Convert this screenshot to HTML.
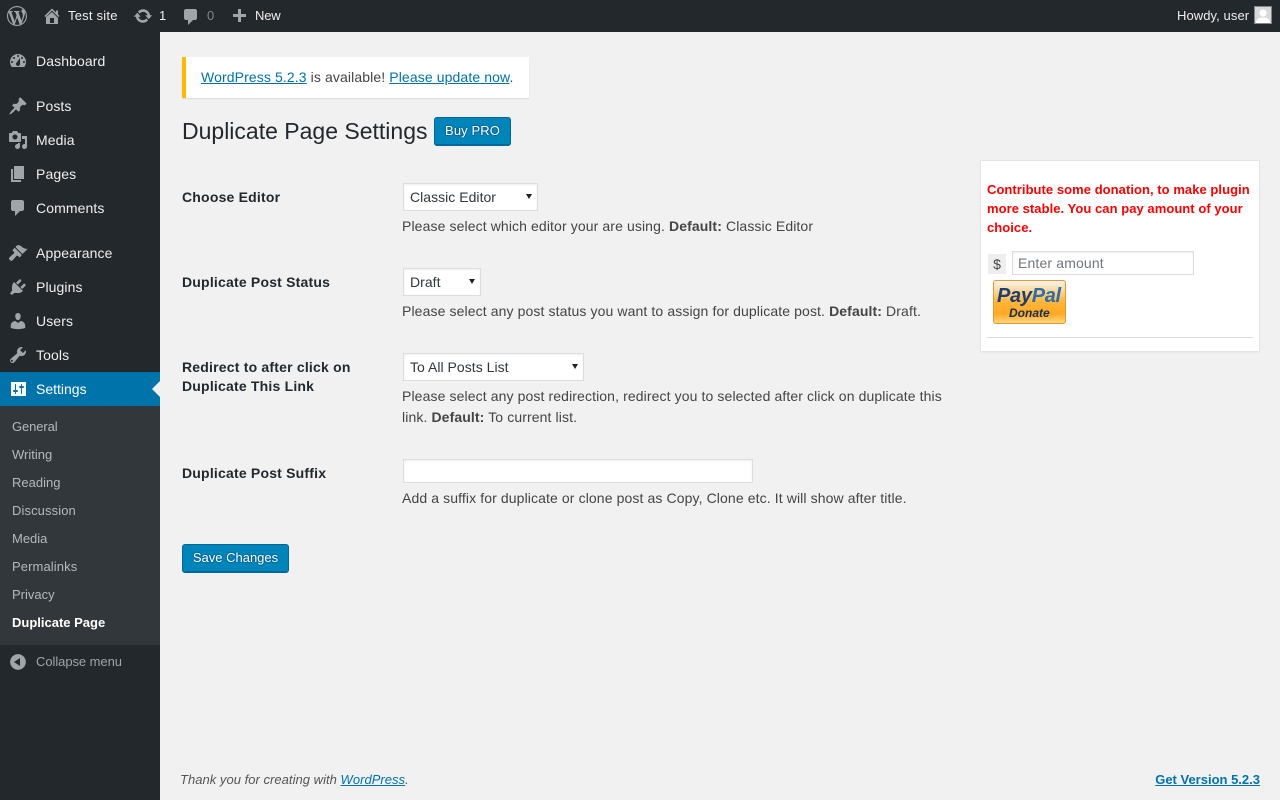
<!DOCTYPE html>
<html lang="en"><head><meta charset="utf-8"><title>Duplicate Page Settings</title>
<style>
*{box-sizing:border-box}
html,body{margin:0;padding:0;width:1280px;height:800px;overflow:hidden;background:#f1f1f1;font-family:"Liberation Sans",Arial,sans-serif;font-size:14px;color:#444}
.a{position:absolute;white-space:nowrap}
#bar{position:absolute;left:0;top:0;width:1280px;height:32px;background:#23282d}
#side{position:absolute;left:0;top:32px;width:160px;height:768px;background:#23282d}
#sub{position:absolute;left:0;top:406px;width:160px;height:239px;background:#32373c}
#act{position:absolute;left:0;top:372px;width:160px;height:34px;background:#0073aa}
.bt{font-size:13px;line-height:32px;top:0;color:#eee}
.m{left:36px;font-size:14px;line-height:18px;color:#eee;letter-spacing:.1px}
.s{left:12px;font-size:13px;line-height:18px;color:#b4b9be}
svg{position:absolute;fill:#a0a5aa}
a{color:#0073aa;text-decoration:underline}
.lb{left:182px;font-weight:700;font-size:14px;line-height:19px;color:#23282d;letter-spacing:.2px}
.sel{position:absolute;background:#fff;border:1px solid #ddd;box-shadow:inset 0 1px 2px rgba(0,0,0,.07);font-size:14px;color:#32373c;line-height:26px;padding-left:6px;letter-spacing:.03px}
.sel i{position:absolute;right:5px;top:10px;width:0;height:0;border-left:3px solid transparent;border-right:3px solid transparent;border-top:5px solid #222}
.d{left:402px;font-size:14px;line-height:21px;color:#444;letter-spacing:.11px}
.btn{position:absolute;background:#0085ba;border:1px solid #006799;border-bottom-width:2px;border-radius:3px;color:#fff;font-size:13px;text-align:center;text-shadow:0 -1px 1px #006799,1px 0 1px #006799,0 1px 1px #006799,-1px 0 1px #006799}
</style></head><body>

<div id="bar"></div>
<svg style="left:7px;top:6px" width="20" height="20" viewBox="0 0 20 20"><path fill-rule="evenodd" d="M20 10c0-5.510-4.490-10-10-10C4.480 0 0 4.490 0 10c0 5.520 4.480 10 10 10 5.510 0 10-4.480 10-10zM7.780 15.370L4.370 6.220c.55-.02 1.170-.08 1.170-.08.5-.06.44-1.130-.06-1.110 0 0-1.450.11-2.370.11-.18 0-.37 0-.58-.01C4.120 2.690 6.870 1.110 10 1.110c2.330 0 4.450.87 6.050 2.340-.68-.11-1.650.39-1.650 1.580 0 .74.45 1.360.9 2.100.35.61.55 1.360.55 2.460 0 1.490-1.400 5-1.400 5l-3.030-8.370c.54-.02.82-.17.82-.17.5-.05.44-1.250-.06-1.220 0 0-1.440.12-2.380.12-.87 0-2.330-.12-2.330-.12-.5-.03-.56 1.200-.06 1.220l.92.08 1.260 3.410zM17.410 10c.24-.64.74-1.870.43-4.250.7 1.290 1.050 2.710 1.050 4.250 0 3.290-1.730 6.240-4.400 7.780.97-2.590 1.940-5.200 2.920-7.780zM6.100 18.090C3.120 16.650 1.110 13.530 1.110 10c0-1.300.23-2.480.72-3.590C3.250 10.300 4.670 14.200 6.100 18.090zm4.030-6.630l2.580 6.980c-.86.29-1.760.45-2.710.45-.79 0-1.570-.11-2.290-.33.81-2.380 1.620-4.740 2.420-7.100z"/></svg>
<svg style="left:42px;top:6px" width="20" height="20" viewBox="0 0 20 20"><path fill-rule="evenodd" d="M16 8.500l1.530 1.530-1.060 1.060L10 4.620l-6.470 6.470-1.060-1.060L10 2.500l4 4v-2h2v4zm-6-2.460l6 5.990V18H4v-6.970zM12 17v-5H8v5h4z"/></svg>
<div class="a bt" style="left:68px;letter-spacing:.22px">Test site</div>
<svg style="left:133px;top:6px" width="20" height="20" viewBox="0 0 20 20"><path d="M10.200 3.280c3.530 0 6.430 2.610 6.920 6h2.080l-3.500 4-3.500-4h2.320c-.45-1.970-2.210-3.440-4.320-3.440-1.450 0-2.730.71-3.540 1.780L4.950 5.660C6.230 4.200 8.110 3.280 10.200 3.280zm-.4 13.440c-3.520 0-6.430-2.610-6.920-6H.8l3.500-4c1.170 1.330 2.330 2.670 3.500 4H5.480c.45 1.970 2.210 3.440 4.320 3.440 1.450 0 2.730-.71 3.540-1.780l1.710 1.950c-1.280 1.460-3.150 2.390-5.250 2.390z"/></svg>
<div class="a bt" style="left:159px">1</div>
<svg style="left:181px;top:7px" width="20" height="20" viewBox="0 0 20 20"><path d="M5 2h9c1.100 0 2 .9 2 2v7c0 1.100-.9 2-2 2h-2l-5 5v-5H5c-1.100 0-2-.9-2-2V4c0-1.100.9-2 2-2z"/></svg>
<div class="a bt" style="left:207px;color:#82878c">0</div>
<svg style="left:228.500px;top:7px" width="20" height="20" viewBox="0 0 20 20"><path d="M17 7v3h-5v5H9v-5H4V7h5V2h3v5h5z"/></svg>
<div class="a bt" style="left:255px;letter-spacing:-.2px">New</div>
<div class="a bt" style="left:1177px;letter-spacing:.08px">Howdy, user</div>
<svg style="left:1254px;top:6px;fill:none" width="18" height="18" viewBox="0 0 18 18"><rect x=".5" y=".5" width="17" height="17" fill="#d9d9d9" stroke="#82878c"/><circle cx="9" cy="7" r="3.600" fill="#fff"/><path d="M2 17c0-4 3-5.500 7-5.500s7 1.500 7 5.500z" fill="#fff"/></svg>

<div id="side"></div>
<div id="sub"></div>
<div id="act"></div>
<div class="a" style="left:152px;top:381px;width:0;height:0;border:8px solid transparent;border-left:0;border-right-color:#f1f1f1"></div>

<svg style="left:8px;top:51px" width="20" height="20" viewBox="0 0 20 20"><path fill-rule="evenodd" d="M3.760 16h12.480c1.100-1.370 1.760-3.110 1.760-5 0-4.420-3.580-8-8-8s-8 3.580-8 8c0 1.890.66 3.630 1.760 5zM10 4c.55 0 1 .45 1 1s-.45 1-1 1-1-.45-1-1 .45-1 1-1zM6 6c.55 0 1 .45 1 1s-.45 1-1 1-1-.45-1-1 .45-1 1-1zm8 0c.55 0 1 .45 1 1s-.45 1-1 1-1-.45-1-1 .45-1 1-1zm-5.370 5.550L12 7v6c0 1.100-.9 2-2 2s-2-.9-2-2c0-.57.24-1.080.63-1.450zM4 10c.55 0 1 .45 1 1s-.45 1-1 1-1-.45-1-1 .45-1 1-1zm12 0c.55 0 1 .45 1 1s-.45 1-1 1-1-.45-1-1 .45-1 1-1z"/></svg>
<div class="a m" style="top:52px">Dashboard</div>
<svg style="left:8px;top:96px" width="20" height="20" viewBox="0 0 20 20"><path d="M10.440 3.020l1.820-1.820 6.360 6.350-1.830 1.820c-1.050-.68-2.480-.57-3.410.36l-.75.75c-.92.93-1.040 2.350-.35 3.410l-1.830 1.820-2.410-2.410-2.800 2.790c-.42.42-3.380 2.710-3.800 2.290s1.860-3.390 2.280-3.810l2.790-2.790L4.100 9.360l1.830-1.820c1.050.69 2.480.57 3.400-.36l.75-.75c.93-.92 1.050-2.350.36-3.410z"/></svg>
<div class="a m" style="top:97px">Posts</div>
<svg style="left:8px;top:130px" width="20" height="20" viewBox="0 0 20 20"><path fill-rule="evenodd" d="M13 11V4c0-.55-.45-1-1-1h-1.670L9 1H5L3.670 3H2c-.55 0-1 .45-1 1v7c0 .55.45 1 1 1h10c.55 0 1-.45 1-1zM7 4.500c1.380 0 2.500 1.120 2.500 2.500S8.380 9.500 7 9.500 4.500 8.380 4.500 7 5.620 4.500 7 4.500zM14 6h5v10.500c0 1.380-1.120 2.500-2.500 2.500S14 17.880 14 16.500s1.120-2.500 2.500-2.500c.17 0 .34.02.5.05V9h-3V6zm-4 8.050V13h2v3.500c0 1.380-1.120 2.500-2.500 2.500S7 17.880 7 16.500 8.120 14 9.500 14c.17 0 .34.02.5.05z"/></svg>
<div class="a m" style="top:131px">Media</div>
<svg style="left:8px;top:164px" width="20" height="20" viewBox="0 0 20 20"><path d="M6 15V2h10v13H6zm-1 1h8v2H3V5h2v11z"/></svg>
<div class="a m" style="top:165px">Pages</div>
<svg style="left:8px;top:198px" width="20" height="20" viewBox="0 0 20 20"><path d="M5 2h9c1.100 0 2 .9 2 2v7c0 1.100-.9 2-2 2h-2l-5 5v-5H5c-1.100 0-2-.9-2-2V4c0-1.100.9-2 2-2z"/></svg>
<div class="a m" style="top:199px">Comments</div>
<svg style="left:8px;top:243px" width="20" height="20" viewBox="0 0 20 20"><path d="M14.480 11.060L7.410 3.990l1.500-1.500c.5-.56 2.300-.47 3.510.32 1.210.8 1.430 1.280 2.910 2.100 1.180.64 2.450 1.260 4.450.85zm-.71.71L6.700 4.700 4.930 6.470c-.39.39-.39 1.020 0 1.410l1.060 1.060c.39.39.39 1.030 0 1.420-.6.6-1.430 1.150-2.210 1.890-.68.65-1.650 1.650-2.600 2.600-.39.39-.39 1.020 0 1.420l1.410 1.410c.39.39 1.020.39 1.420 0 .95-.95 1.950-1.920 2.600-2.600.74-.78 1.290-1.610 1.890-2.210.39-.39 1.030-.39 1.420 0l1.060 1.060c.39.39 1.020.39 1.410 0z"/></svg>
<div class="a m" style="top:244px">Appearance</div>
<svg style="left:8px;top:277px" width="20" height="20" viewBox="0 0 20 20"><path d="M13.110 4.360L9.870 7.600 8 5.730l3.240-3.240c.35-.34 1.050-.2 1.560.32.52.51.66 1.210.31 1.550zm-8 1.770l.91-1.120 9.010 9.010-1.190.84c-.71.71-2.630 1.160-3.820 1.160H6.140L4.900 17.260c-.59.59-1.540.59-2.120 0-.59-.58-.59-1.530 0-2.120l1.240-1.240v-3.880c0-1.130.52-3.130 1.090-3.890zm7.260 3.970l3.240-3.240c.34-.35 1.040-.21 1.550.31.52.51.66 1.210.31 1.550l-3.240 3.250z"/></svg>
<div class="a m" style="top:278px">Plugins</div>
<svg style="left:8px;top:311px" width="20" height="20" viewBox="0 0 20 20"><path d="M10 9.250c-2.270 0-2.730-3.440-2.730-3.440C7 4.020 7.820 2 9.960 2c2.150 0 2.970 2.020 2.700 3.810 0 0-.41 3.440-2.660 3.440zm0 2.570L12.720 10c2.390 0 4.520 2.330 4.520 4.530v2.490s-3.650 1.130-7.240 1.130c-3.650 0-7.240-1.130-7.240-1.130v-2.490c0-2.250 1.940-4.480 4.470-4.480z"/></svg>
<div class="a m" style="top:312px">Users</div>
<svg style="left:8px;top:345px" width="20" height="20" viewBox="0 0 20 20"><path fill-rule="evenodd" d="M16.680 9.770c-1.340 1.340-3.300 1.670-4.950.99l-5.410 6.520c-.99.99-2.590.99-3.570 0-.99-.98-.99-2.580 0-3.570l6.520-5.420c-.68-1.650-.35-3.610.99-4.950 1.280-1.280 3.120-1.620 4.720-1.060l-2.890 2.890 2.820 2.820 2.860-2.870c.53 1.580.18 3.390-1.090 4.650zM4.660 15.040c-.39-.39-1.030-.39-1.420 0s-.39 1.030 0 1.420 1.030.39 1.420 0 .39-1.030 0-1.420z"/></svg>
<div class="a m" style="top:346px">Tools</div>
<svg style="left:8px;top:379px;fill:#fff" width="20" height="20" viewBox="0 0 20 20"><path fill-rule="evenodd" d="M3 3h15v14H3zM8 11h1c.55 0 1 .45 1 1s-.45 1-1 1H8v1.500c0 .28-.22.5-.5.5s-.5-.22-.5-.5V13H6c-.55 0-1-.45-1-1s.45-1 1-1h1V5.500c0-.28.22-.5.5-.5s.5.22.5.5V11zm5-2h-1c-.55 0-1-.45-1-1s.45-1 1-1h1V5.500c0-.28.22-.5.5-.5s.5.22.5.5V7h1c.55 0 1 .45 1 1s-.45 1-1 1h-1v5.500c0 .28-.22.5-.5.5s-.5-.22-.5-.5V9z"/></svg>
<div class="a m" style="top:380px;color:#fff;letter-spacing:0">Settings</div>

<div class="a s" style="top:418px;letter-spacing:-.1px">General</div>
<div class="a s" style="top:446px">Writing</div>
<div class="a s" style="top:474px">Reading</div>
<div class="a s" style="top:502px;letter-spacing:.1px">Discussion</div>
<div class="a s" style="top:530px">Media</div>
<div class="a s" style="top:558px;letter-spacing:.1px">Permalinks</div>
<div class="a s" style="top:586px">Privacy</div>
<div class="a s" style="top:614px;color:#fff;font-weight:700">Duplicate Page</div>
<svg style="left:8px;top:652px" width="20" height="20" viewBox="0 0 20 20"><path fill-rule="evenodd" d="M10 2.160c4.330 0 7.840 3.510 7.840 7.840s-3.510 7.840-7.840 7.840S2.160 14.330 2.160 10 5.670 2.160 10 2.160zM12 14V6l-6 4z"/></svg>
<div class="a" style="left:36px;top:653px;font-size:13px;line-height:18px;color:#a0a5aa;letter-spacing:-.06px">Collapse menu</div>

<div class="a" style="left:182px;top:57px;width:347px;height:41px;background:#fff;border-left:4px solid #ffb900;box-shadow:0 1px 1px rgba(0,0,0,.1)"></div>
<div class="a" style="left:201px;top:68px;line-height:19px;letter-spacing:.11px"><a href="#">WordPress 5.2.3</a> is available! <a href="#">Please update now</a>.</div>
<div class="a" style="left:182px;top:116px;font-size:23px;line-height:30px;color:#23282d">Duplicate Page Settings</div>
<div class="btn" style="left:434px;top:117px;width:77px;height:29px;line-height:26px;letter-spacing:.1px">Buy PRO</div>

<div class="a lb" style="top:188px">Choose Editor</div>
<div class="sel" style="left:403px;top:183px;width:135px;height:28px">Classic Editor<i></i></div>
<div class="a d" style="top:216px">Please select which editor your are using. <b>Default:</b> Classic Editor</div>

<div class="a lb" style="top:273px">Duplicate Post Status</div>
<div class="sel" style="left:403px;top:268px;width:78px;height:28px">Draft<i></i></div>
<div class="a d" style="top:301px">Please select any post status you want to assign for duplicate post. <b>Default:</b> Draft.</div>

<div class="a lb" style="top:358px">Redirect to after click on<br>Duplicate This Link</div>
<div class="sel" style="left:403px;top:353px;width:181px;height:28px">To All Posts List<i></i></div>
<div class="a d" style="top:386px">Please select any post redirection, redirect you to selected after click on duplicate this<br>link. <b>Default:</b> To current list.</div>

<div class="a lb" style="top:464px">Duplicate Post Suffix</div>
<div class="a" style="left:403px;top:459px;width:350px;height:24px;background:#fff;border:1px solid #ddd;box-shadow:inset 0 1px 2px rgba(0,0,0,.07)"></div>
<div class="a d" style="top:488px">Add a suffix for duplicate or clone post as Copy, Clone etc. It will show after title.</div>

<div class="btn" style="left:182px;top:544px;width:107px;height:29px;line-height:26px">Save Changes</div>

<div class="a" style="left:980px;top:160px;width:280px;height:192px;background:#fff;border:1px solid #e5e5e5;box-shadow:0 1px 1px rgba(0,0,0,.04)"></div>
<div class="a" style="left:987px;top:180px;font-size:13px;font-weight:700;line-height:19px;color:#f00;letter-spacing:.05px">Contribute some donation, to make plugin<br>more stable. You can pay amount of your<br>choice.</div>
<div class="a" style="left:988px;top:254px;width:18px;height:20px;background:#eee;color:#444;font-size:14px;line-height:20px;text-align:center">$</div>
<div class="a" style="left:1012px;top:251px;width:182px;height:24px;background:#fff;border:1px solid #ddd;box-shadow:inset 0 1px 2px rgba(0,0,0,.07);color:#72777c;font-size:14px;line-height:22px;padding-left:5px;letter-spacing:.15px">Enter amount</div>
<div class="a" style="left:993px;top:280px;width:73px;height:44px;border:1px solid #e8962e;border-radius:3px;background:linear-gradient(#f8f4ee 0,#fcd9a0 22%,#ffb53a 50%,#ffa822 78%,#ffd67f 100%);overflow:hidden">
<div class="a" style="left:3px;top:3px;font-size:20px;line-height:24px;font-weight:700;font-style:italic;letter-spacing:-.3px;color:#1d3e73">Pay<span style="color:#2c6ea8">Pal</span></div>
<div class="a" style="left:15px;top:25px;font-size:12px;line-height:14px;font-weight:700;font-style:italic;color:#152d5a">Donate</div>
</div>
<div class="a" style="left:987px;top:337px;width:266px;height:1px;background:#ddd"></div>

<div class="a" style="left:180px;top:771px;font-size:13px;line-height:18px;font-style:italic;color:#555;letter-spacing:.03px">Thank you for creating with <a href="#">WordPress</a>.</div>
<div class="a" style="right:20px;top:771px;font-size:13px;line-height:18px;font-weight:700"><a href="#">Get Version 5.2.3</a></div>
</body></html>
